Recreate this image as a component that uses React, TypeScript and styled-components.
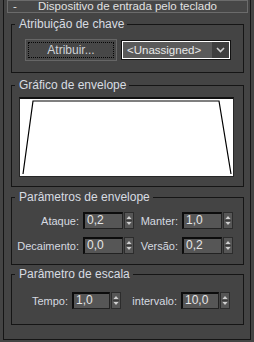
import React from 'react';
import styled, { createGlobalStyle } from 'styled-components';

const GlobalStyle = createGlobalStyle`
  html, body {
    margin: 0;
    padding: 0;
    background: #444444;
  }
  body {
    font-family: 'Liberation Sans', Arial, sans-serif;
    font-size: 11px;
    color: #dcdcdc;
  }
`;

const Page = styled.div`
  width: 254px;
  height: 342px;
  background: #444444;
  overflow: hidden;
`;

const Rollout = styled.div`
  margin: 4px 0 0 3px;
  width: 246px;
  border: 1px solid #151515;
  border-top: none;
  padding-bottom: 14px;
`;

const TitleBar = styled.div`
  margin: -4px 2px 0 3px;
  height: 11px;
  border: 1px solid #6b6b6b;
  background: #474747;
  display: flex;
  align-items: center;
  position: relative;
  line-height: 11px;
  font-size: 11.5px;
  color: #e2e2e2;
  .toggle {
    position: absolute;
    left: 5px;
    top: 0;
  }
  .title {
    flex: 1;
    text-align: center;
  }
`;

const Group = styled.div<{ $top: number }>`
  position: relative;
  margin: ${p => p.$top}px 6px 0 7px;
  border: 1px solid #151515;
`;

const Legend = styled.span`
  position: absolute;
  top: -8px;
  left: 3px;
  padding: 0 3px 0 4px;
  line-height: 14px;
  font-size: 12px;
  background: #444444;
  color: #d8dce2;
  white-space: nowrap;
`;

const KeyRow = styled.div`
  display: flex;
  align-items: center;
  padding: 14px 0 11px 13px;
  gap: 4px;
`;

const Button = styled.div`
  width: 92px;
  height: 22px;
  box-sizing: border-box;
  border: 1px solid #666666;
  background: #474747;
  padding: 2px;
  .focus {
    height: 100%;
    box-sizing: border-box;
    border: 1px dotted #050505;
    display: flex;
    align-items: center;
    justify-content: center;
    font-size: 12px;
    color: #cfd3d8;
  }
`;

const Dropdown = styled.div`
  width: 110px;
  height: 20px;
  box-sizing: border-box;
  border: 1px solid #111111;
  display: flex;
  .inner {
    flex: 1;
    display: flex;
    border: 1px solid #ffffff;
  }
  .value {
    flex: 1;
    background: #5a5a5a;
    color: #e8e8e8;
    padding-left: 4px;
    line-height: 16px;
    font-size: 11.5px;
  }
  .arrow {
    width: 17px;
    background: #3f3f3f;
    display: flex;
    align-items: center;
    justify-content: center;
  }
`;

const GraphWrap = styled.div`
  padding: 11px 0 9px 7px;
`;

const Graph = styled.div`
  width: 213px;
  height: 77px;
  background: #ffffff;
  border: 1px solid #262626;
  border-top: 2px solid #111111;
  svg {
    display: block;
  }
`;

const Rows = styled.div<{ $pad: string }>`
  padding: ${p => p.$pad};
  display: flex;
  flex-direction: column;
  gap: 8px;
`;

const Row = styled.div`
  display: flex;
  align-items: center;
  height: 17px;
`;

const FieldLabel = styled.span<{ $w: number }>`
  width: ${p => p.$w}px;
  text-align: right;
  margin-right: 4px;
  font-size: 11px;
  color: #d6dae0;
  white-space: nowrap;
`;

const Input = styled.div<{ $w: number }>`
  width: ${p => p.$w}px;
  height: 17px;
  box-sizing: border-box;
  background: #565656;
  border: 1px solid #222222;
  border-top: 2px solid #0c0c0c;
  border-left: 2px solid #0c0c0c;
  padding-left: 2px;
  line-height: 13px;
  font-size: 12px;
  color: #e6e6e6;
`;

const Spinner = styled.div`
  width: 10px;
  height: 17px;
  margin-left: 1px;
  box-sizing: border-box;
  background: #565656;
  border: 1px solid #2c2c2c;
  display: flex;
  flex-direction: column;
  svg {
    display: block;
  }
`;

const SpinnerIcon = () => (
  <svg width="8" height="15" viewBox="0 0 8 15">
    <path d="M4 3 L6.5 6 L1.5 6 Z" fill="#d0d0d0" />
    <line x1="1" y1="7.5" x2="7" y2="7.5" stroke="#3a3a3a" strokeWidth="1" />
    <path d="M1.5 9 L6.5 9 L4 12 Z" fill="#d0d0d0" />
  </svg>
);

interface FieldProps {
  label: string;
  value: string;
  labelWidth: number;
  inputWidth: number;
}

const Field = ({ label, value, labelWidth, inputWidth }: FieldProps) => (
  <>
    <FieldLabel $w={labelWidth}>{label}</FieldLabel>
    <Input $w={inputWidth}>{value}</Input>
    <Spinner>
      <SpinnerIcon />
    </Spinner>
  </>
);

export default function App() {
  return (
    <Page>
      <GlobalStyle />
      <Rollout>
        <TitleBar>
          <span className="toggle">-</span>
          <span className="title">Dispositivo de entrada pelo teclado</span>
        </TitleBar>

        <Group $top={11}>
          <Legend>Atribuição de chave</Legend>
          <KeyRow>
            <Button>
              <div className="focus">Atribuir...</div>
            </Button>
            <Dropdown>
              <div className="inner">
                <div className="value">&lt;Unassigned&gt;</div>
                <div className="arrow">
                  <svg width="9" height="6" viewBox="0 0 9 6">
                    <path d="M1 1 L4.5 4.5 L8 1" stroke="#cfcfcf" strokeWidth="1.6" fill="none" />
                  </svg>
                </div>
              </div>
            </Dropdown>
          </KeyRow>
        </Group>

        <Group $top={12}>
          <Legend>Gráfico de envelope</Legend>
          <GraphWrap>
            <Graph>
              <svg width="213" height="77" viewBox="0 0 213 77">
                <polyline
                  points="3,75 13,2 199,2 211,75"
                  fill="none"
                  stroke="#000000"
                  strokeWidth="1.2"
                />
              </svg>
            </Graph>
          </GraphWrap>
        </Group>

        <Group $top={10}>
          <Legend>Parâmetros de envelope</Legend>
          <Rows $pad="14px 0 10px 0">
            <Row>
              <Field label="Ataque:" value="0,2" labelWidth={67} inputWidth={40} />
              <Field label="Manter:" value="1,0" labelWidth={44} inputWidth={40} />
            </Row>
            <Row>
              <Field label="Decaimento:" value="0,0" labelWidth={67} inputWidth={40} />
              <Field label="Versão:" value="0,2" labelWidth={44} inputWidth={40} />
            </Row>
          </Rows>
        </Group>

        <Group $top={9}>
          <Legend>Parâmetro de escala</Legend>
          <Rows $pad="17px 0 15px 0">
            <Row>
              <Field label="Tempo:" value="1,0" labelWidth={56} inputWidth={38} />
              <Field label="intervalo:" value="10,0" labelWidth={56} inputWidth={38} />
            </Row>
          </Rows>
        </Group>
      </Rollout>
    </Page>
  );
}
